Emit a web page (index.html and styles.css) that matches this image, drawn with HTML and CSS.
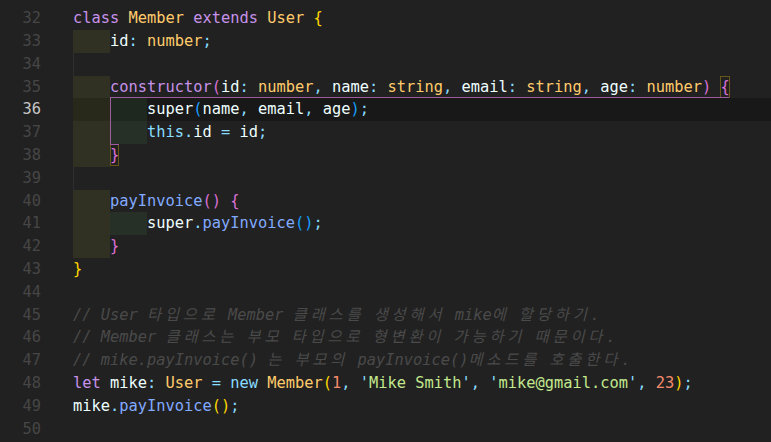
FILE: index.html
```html
<!DOCTYPE html>
<html lang="ko">
<head>
<meta charset="utf-8">
<title>Member.ts</title>
<link rel="stylesheet" href="styles.css">
</head>
<body>
<div class="editor">
  <div class="row"><span class="ln">32</span><span class="code"><span class="k">class</span> <span class="t">Member</span> <span class="k">extends</span> <span class="t">User</span> <span class="b1">{</span></span></div>
  <div class="row"><span class="ln">33</span><span class="code"><span class="i1">    </span><span class="v">id</span><span class="p">:</span> <span class="t">number</span><span class="p">;</span></span></div>
  <div class="row"><span class="ln">34</span><span class="code"><span class="guide"></span></span></div>
  <div class="row"><span class="ln">35</span><span class="code"><span class="i1">    </span><span class="k">constructor</span><span class="b2">(</span><span class="v">id</span><span class="p">:</span> <span class="t">number</span><span class="p">,</span> <span class="v">name</span><span class="p">:</span> <span class="t">string</span><span class="p">,</span> <span class="v">email</span><span class="p">:</span> <span class="t">string</span><span class="p">,</span> <span class="v">age</span><span class="p">:</span> <span class="t">number</span><span class="b2">)</span> <span class="b2 bm">{</span></span></div>
  <div class="row cur"><span class="ln">36</span><span class="code"><span class="i1">    </span><span class="i2">    </span><span class="v">super</span><span class="b3">(</span><span class="v">name</span><span class="p">,</span> <span class="v">email</span><span class="p">,</span> <span class="v">age</span><span class="b3">)</span><span class="p">;</span></span></div>
  <div class="row"><span class="ln">37</span><span class="code"><span class="i1">    </span><span class="i2">    </span><span class="c">this</span><span class="p">.</span><span class="v">id</span> <span class="p">=</span> <span class="v">id</span><span class="p">;</span></span></div>
  <div class="row"><span class="ln">38</span><span class="code"><span class="i1">    </span><span class="b2 bm bt">}</span></span></div>
  <div class="row"><span class="ln">39</span><span class="code"><span class="guide"></span></span></div>
  <div class="row"><span class="ln">40</span><span class="code"><span class="i1">    </span><span class="f">payInvoice</span><span class="b2">()</span> <span class="b2">{</span></span></div>
  <div class="row"><span class="ln">41</span><span class="code"><span class="i1">    </span><span class="i2">    </span><span class="v">super</span><span class="p">.</span><span class="f">payInvoice</span><span class="b3">()</span><span class="p">;</span></span></div>
  <div class="row"><span class="ln">42</span><span class="code"><span class="i1">    </span><span class="b2">}</span></span></div>
  <div class="row"><span class="ln">43</span><span class="code"><span class="b1">}</span></span></div>
  <div class="row"><span class="ln">44</span><span class="code"></span></div>
  <div class="row"><span class="ln">45</span><span class="code cm">// User <span class="ko">타입으로</span> Member <span class="ko">클래스를</span> <span class="ko">생성해서</span> mike<span class="ko">에</span> <span class="ko">할당하기</span>.</span></div>
  <div class="row"><span class="ln">46</span><span class="code cm">// Member <span class="ko">클래스는</span> <span class="ko">부모</span> <span class="ko">타입으로</span> <span class="ko">형변환이</span> <span class="ko">가능하기</span> <span class="ko">때문이다</span>.</span></div>
  <div class="row"><span class="ln">47</span><span class="code cm">// mike.payInvoice() <span class="ko">는</span> <span class="ko">부모의</span> payInvoice()<span class="ko">메소드를</span> <span class="ko">호출한다</span>.</span></div>
  <div class="row"><span class="ln">48</span><span class="code"><span class="k">let</span> <span class="v">mike</span><span class="p">:</span> <span class="t">User</span> <span class="p">=</span> <span class="c">new</span> <span class="t">Member</span><span class="b1">(</span><span class="n">1</span><span class="p">,</span> <span class="p">'</span><span class="s">Mike Smith</span><span class="p">'</span><span class="p">,</span> <span class="p">'</span><span class="s">mike@gmail.com</span><span class="p">'</span><span class="p">,</span> <span class="n">23</span><span class="b1">)</span><span class="p">;</span></span></div>
  <div class="row"><span class="ln">49</span><span class="code"><span class="v">mike</span><span class="p">.</span><span class="f">payInvoice</span><span class="b1">()</span><span class="p">;</span></span></div>
  <div class="row"><span class="ln">50</span><span class="code"></span></div>
  <div class="bguide"></div>
</div>
</body>
</html>
```
FILE: styles.css
```css
html, body {
  margin: 0;
  padding: 0;
  background: #212121;
  overflow: hidden;
}

.editor {
  position: relative;
  height: 442px;
  padding-top: 7.2px;
  box-sizing: border-box;
  font-family: "DejaVu Sans Mono", "Noto Sans CJK KR", monospace;
  font-size: 15.36px;
  color: #eeffff;
}

.row {
  display: flex;
  height: 22.8px;
  line-height: 22px;
  white-space: pre;
}

.ln {
  flex: none;
  width: 41px;
  padding-right: 32px;
  text-align: right;
  color: #464646;
}

.row.cur .ln {
  color: #c6c6c6;
}

.code {
  flex: 1;
  height: 22.8px;
}

.row.cur .code {
  background: #181818;
}

.i1, .i2 {
  display: inline-block;
  height: 22.8px;
  vertical-align: top;
}

.i1 { background: rgba(255, 255, 64, 0.07); }
.i2 { background: rgba(127, 255, 127, 0.07); }

.guide {
  display: inline-block;
  width: 1px;
  height: 22.8px;
  vertical-align: top;
  background: #2e2e2e;
}

.k { color: #c792ea; }
.t { color: #ffcb6b; }
.v { color: #eeffff; }
.p { color: #89ddff; }
.c { color: #89ddff; }
.f { color: #82aaff; }
.s { color: #c3e88d; }
.n { color: #f78c6c; }
.b1 { color: #ffd700; }
.b2 { color: #da70d6; }
.b3 { color: #179fff; }

.bm {
  display: inline-block;
  height: 22px;
  box-shadow: inset 0 0 0 1px #665617;
}

.bm.bt {
  box-shadow: inset 0 1px 0 #a05a9e, inset 0 0 0 1px #665617;
}

.cm {
  color: #4a4a4a;
  font-style: italic;
}

.ko {
  letter-spacing: 3.8px;
}

.bguide {
  position: absolute;
  left: 109.5px;
  top: 97.4px;
  width: 619px;
  height: 46.6px;
  border-top: 1px solid #a05a9e;
  border-left: 1px solid #a05a9e;
  box-sizing: border-box;
  pointer-events: none;
}
```
